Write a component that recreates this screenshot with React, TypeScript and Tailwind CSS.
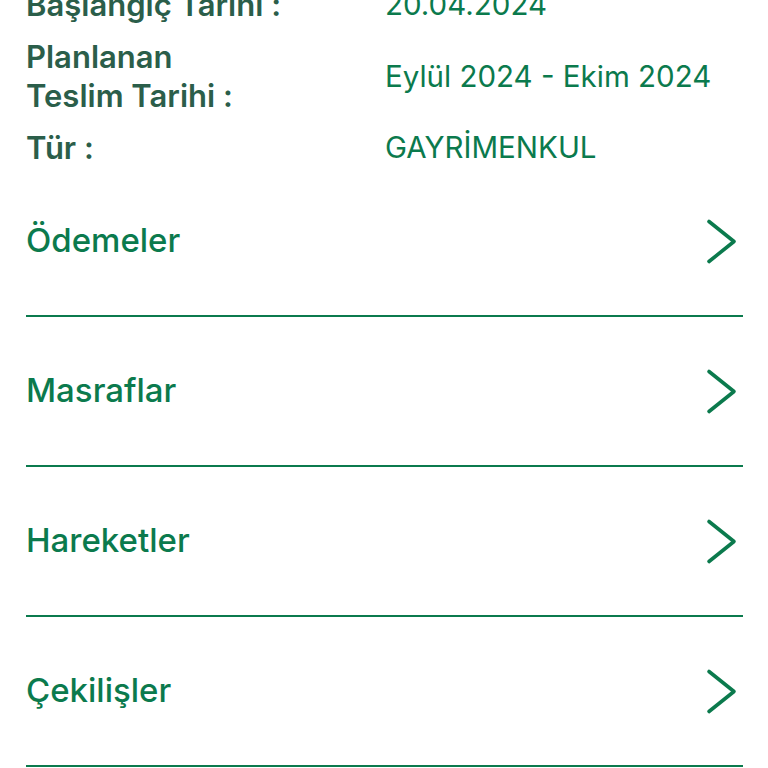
const details = [
  { label: ['Başlangıç Tarihi :'], value: '20.04.2024' },
  { label: ['Planlanan', 'Teslim Tarihi :'], value: 'Eylül 2024 - Ekim 2024' },
  { label: ['Tür :'], value: 'GAYRİMENKUL' },
]

const links = ['Ödemeler', 'Masraflar', 'Hareketler', 'Çekilişler']

function Chevron() {
  return (
    <svg width="33" height="47" viewBox="0 0 33 47" fill="none" className="mr-[5px] shrink-0">
      <path
        d="M4 3.5 L29 23.5 L4 43.5"
        stroke="#0b7a4d"
        strokeWidth="3.6"
        strokeLinecap="round"
        strokeLinejoin="round"
      />
    </svg>
  )
}

export default function App() {
  return (
    <div
      className="w-[768px] h-[768px] overflow-hidden bg-white"
      style={{ fontFamily: 'Inter, "Noto Sans", sans-serif' }}
    >
      <div className="-mt-[15px] pl-[26px] pr-[25px]">
        {/* Detail rows */}
        <div className="flex flex-col gap-[13px]">
          {details.map((d, i) => (
            <div key={i} className="grid grid-cols-[359px_1fr] items-center">
              <div className="text-[31px] leading-[39px] font-semibold text-[#2b5e4a]">
                {d.label.map((l, j) => (
                  <div key={j}>{l}</div>
                ))}
              </div>
              <div className="text-[29.5px] leading-[39px] text-[#0b7a4d]">{d.value}</div>
            </div>
          ))}
        </div>

        {/* Links */}
        <div className="flex flex-col">
          {links.map(name => (
            <div
              key={name}
              className="h-[150px] flex items-center justify-between border-b-2 border-[#0b7a4d]"
            >
              <span className="text-[33px] font-medium text-[#0b7a4d]">{name}</span>
              <Chevron />
            </div>
          ))}
        </div>
      </div>
    </div>
  )
}
